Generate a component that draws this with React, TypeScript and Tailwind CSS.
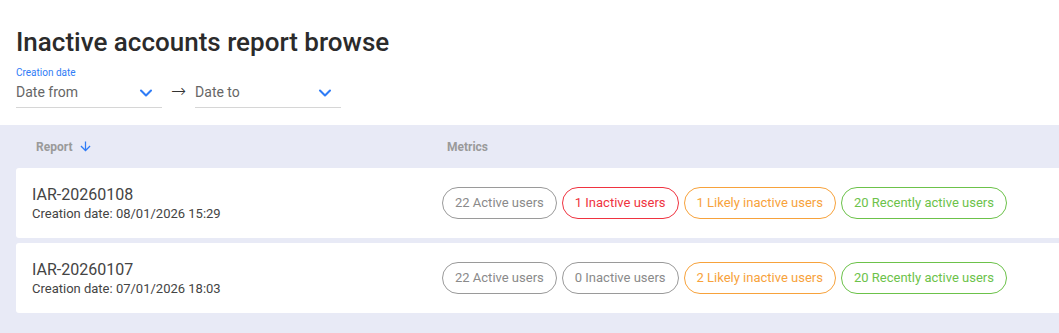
import { ChevronDown } from 'lucide-react'

type Metric = { label: string; tone: 'gray' | 'red' | 'orange' | 'green' }

const reports: { id: string; date: string; metrics: Metric[] }[] = [
  {
    id: 'IAR-20260108',
    date: '08/01/2026 15:29',
    metrics: [
      { label: '22 Active users', tone: 'gray' },
      { label: '1 Inactive users', tone: 'red' },
      { label: '1 Likely inactive users', tone: 'orange' },
      { label: '20 Recently active users', tone: 'green' },
    ],
  },
  {
    id: 'IAR-20260107',
    date: '07/01/2026 18:03',
    metrics: [
      { label: '22 Active users', tone: 'gray' },
      { label: '0 Inactive users', tone: 'gray' },
      { label: '2 Likely inactive users', tone: 'orange' },
      { label: '20 Recently active users', tone: 'green' },
    ],
  },
]

const toneClass = {
  gray: 'border-[#9a9a9a] text-[#8a8a8a]',
  red: 'border-[#ef3340] text-[#ef3340]',
  orange: 'border-[#f7a23b] text-[#f7a23b]',
  green: 'border-[#6cc24a] text-[#6cc24a]',
}

function DateField({ placeholder }: { placeholder: string }) {
  return (
    <div className="w-[146px] h-[26px] border-b border-[#d6d6d6] flex items-start justify-between">
      <span className="text-[14px] leading-[20px] text-[#666]">{placeholder}</span>
      <ChevronDown className="w-5 h-5 mt-[1px] mr-[6px] text-[#2f7cf6]" strokeWidth={2.5} />
    </div>
  )
}

function SortArrow() {
  return (
    <svg viewBox="0 0 24 24" className="w-[15px] h-[15px] fill-[#2f7cf6]">
      <path d="M20 12l-1.41-1.41L13 16.17V4h-2v12.17l-5.58-5.59L4 12l8 8 8-8z" />
    </svg>
  )
}

export default function App() {
  return (
    <div className="w-[1059px] h-[333px] bg-white overflow-hidden font-['Roboto',sans-serif]">
      <div className="px-4 pt-[27px]">
        <h1 className="text-[26px] leading-[30px] font-medium text-[#2b2b2b]">
          Inactive accounts report browse
        </h1>
        <div className="mt-[10px] text-[10px] leading-[12px] text-[#2f7cf6]">Creation date</div>
        <div className="mt-[3px] flex items-start gap-[9px]">
          <DateField placeholder="Date from" />
          <span className="text-[18px] leading-[20px] text-[#333] font-['DejaVu_Sans',sans-serif] font-light -mt-[1px]">
            →
          </span>
          <DateField placeholder="Date to" />
        </div>
      </div>

      <div className="mt-[17px] bg-[#e8eaf6] pb-6">
        <div className="h-[43px] flex items-center text-[12px] font-bold text-[#9a9a9a]">
          <div className="w-[447px] pl-9 flex items-center gap-[6px]">
            Report
            <SortArrow />
          </div>
          <div>Metrics</div>
        </div>
        <div className="pl-4 flex flex-col gap-[5px]">
          {reports.map((r) => (
            <div key={r.id} className="h-[70px] bg-white rounded-l-[3px] flex items-center">
              <div className="w-[426px] pl-4">
                <div className="text-[16px] leading-[20px] text-[#444]">{r.id}</div>
                <div className="text-[13px] leading-[16px] mt-[1px] text-[#444]">
                  Creation date: {r.date}
                </div>
              </div>
              <div className="flex gap-[5px]">
                {r.metrics.map((m) => (
                  <span
                    key={m.label}
                    className={`h-[32px] px-[12px] rounded-full border flex items-center text-[13px] ${toneClass[m.tone]}`}
                  >
                    {m.label}
                  </span>
                ))}
              </div>
            </div>
          ))}
        </div>
      </div>
    </div>
  )
}
